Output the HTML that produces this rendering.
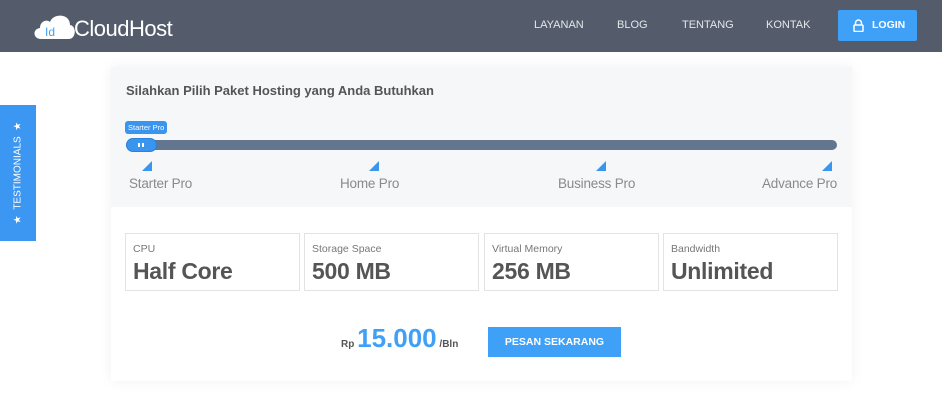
<!DOCTYPE html>
<html><head><meta charset="utf-8"><style>
*{margin:0;padding:0;box-sizing:border-box}
body{width:942px;height:416px;background:#fff;font-family:"Liberation Sans",sans-serif;position:relative;overflow:hidden}
.hdr{position:absolute;left:0;top:0;width:942px;height:52px;background:#545c6b}
.logo{position:absolute;left:33px;top:11px}
.nav a{position:absolute;top:19px;color:#e4e7ec;font-size:11px;text-decoration:none}
.login{position:absolute;left:838px;top:10px;width:79px;height:31px;background:#3fa0f8;border-radius:2px;color:#fff;font-weight:bold;font-size:10.5px;line-height:31px;padding-left:34px}
.card{position:absolute;left:111px;top:67px;width:741px;height:314px;background:#fff;box-shadow:0 0 12px rgba(0,0,0,.06)}
.top{position:absolute;left:0;top:0;width:741px;height:140px;background:#f6f7f9}
.title{position:absolute;left:15px;top:16px;font-size:13px;font-weight:bold;color:#555}
.bar{position:absolute;left:15px;top:73px;width:711px;height:10px;border-radius:5px;background:#64758f}
.knob{position:absolute;left:15px;top:71px;width:31px;height:14px;border-radius:7px;background:#3a95ef;border:1px solid #2a80dd}
.knob:before{content:"";position:absolute;left:11px;top:4px;width:2px;height:4px;background:#fff;box-shadow:4px 0 #fff}
.tip{position:absolute;left:14px;top:54px;background:#3a95ef;color:#fff;font-size:7.5px;padding:2px 3px;border-radius:3px}
.tri{position:absolute;top:94px;width:0;height:0;border-left:10px solid transparent;border-bottom:10px solid #3a95ef}
.lab{position:absolute;top:109px;font-size:13.5px;color:#8a8a8a;letter-spacing:-0.2px}
.box{position:absolute;top:166px;width:175px;height:58px;border:1px solid #e3e3e3}
.box small{position:absolute;left:7px;top:9px;font-size:10.5px;color:#777}
.box b{position:absolute;left:7px;top:24px;font-size:23px;color:#555;letter-spacing:-0.3px}
.price{position:absolute;left:230px;top:256px;color:#555;font-weight:bold}
.btn{position:absolute;left:377px;top:260px;width:133px;height:30px;background:#3fa0f8;color:#fff;font-weight:bold;font-size:10.5px;text-align:center;line-height:30px}
.side{position:absolute;left:0;top:105px;width:36px;height:136px;background:#3c97f2}
.side span{position:absolute;left:50%;top:50%;transform:translate(-50%,-50%) rotate(-90deg);color:#fff;font-size:10px;white-space:nowrap}
</style></head><body>
<div class="hdr">
 <svg class="logo" width="150" height="30" viewBox="0 0 150 30"><path d="M8 28 C0 28 -1 18 7 17 C7 10 14 8 17 11 C20 2 37 2 37 14 C44 15 43 28 36 28 Z" fill="#fff"/><text x="12" y="25" font-family="Liberation Sans" font-size="12" fill="#3fa0f8">Id</text><text x="41" y="25" font-family="Liberation Sans" font-size="22" fill="#fff" letter-spacing="-0.5">CloudHost</text></svg>
 <div class="nav"><a style="left:534px">LAYANAN</a><a style="left:617px">BLOG</a><a style="left:682px">TENTANG</a><a style="left:766px">KONTAK</a></div>
 <div class="login"><svg style="position:absolute;left:15px;top:9px" width="11" height="13" viewBox="0 0 11 13"><path d="M2.5 6V4a3 3 0 0 1 6 0v2" stroke="#fff" stroke-width="1.5" fill="none"/><rect x="1" y="6" width="9" height="6.5" rx="1" fill="none" stroke="#fff" stroke-width="1.5"/></svg>LOGIN</div>
</div>
<div class="side"><span>★ &nbsp;TESTIMONIALS&nbsp; ★</span></div>
<div class="card">
 <div class="top">
  <div class="title">Silahkan Pilih Paket Hosting yang Anda Butuhkan</div>
  <div class="tip">Starter Pro</div>
  <div class="bar"></div><div class="knob"></div>
  <div class="tri" style="left:31px"></div><div class="tri" style="left:258px"></div><div class="tri" style="left:485px"></div><div class="tri" style="left:711px"></div>
  <div class="lab" style="left:18px">Starter Pro</div><div class="lab" style="left:229px">Home Pro</div><div class="lab" style="left:447px">Business Pro</div><div class="lab" style="left:651px">Advance Pro</div>
 </div>
 <div class="box" style="left:14px"><small>CPU</small><b>Half Core</b></div>
 <div class="box" style="left:193px"><small>Storage Space</small><b>500 MB</b></div>
 <div class="box" style="left:373px"><small>Virtual Memory</small><b>256 MB</b></div>
 <div class="box" style="left:552px"><small>Bandwidth</small><b>Unlimited</b></div>
 <div class="price"><span style="font-size:10px">Rp </span><span style="font-size:26px;color:#3fa0f8">15.000</span><span style="font-size:10px"> /Bln</span></div>
 <div class="btn">PESAN SEKARANG</div>
</div>
</body></html>
